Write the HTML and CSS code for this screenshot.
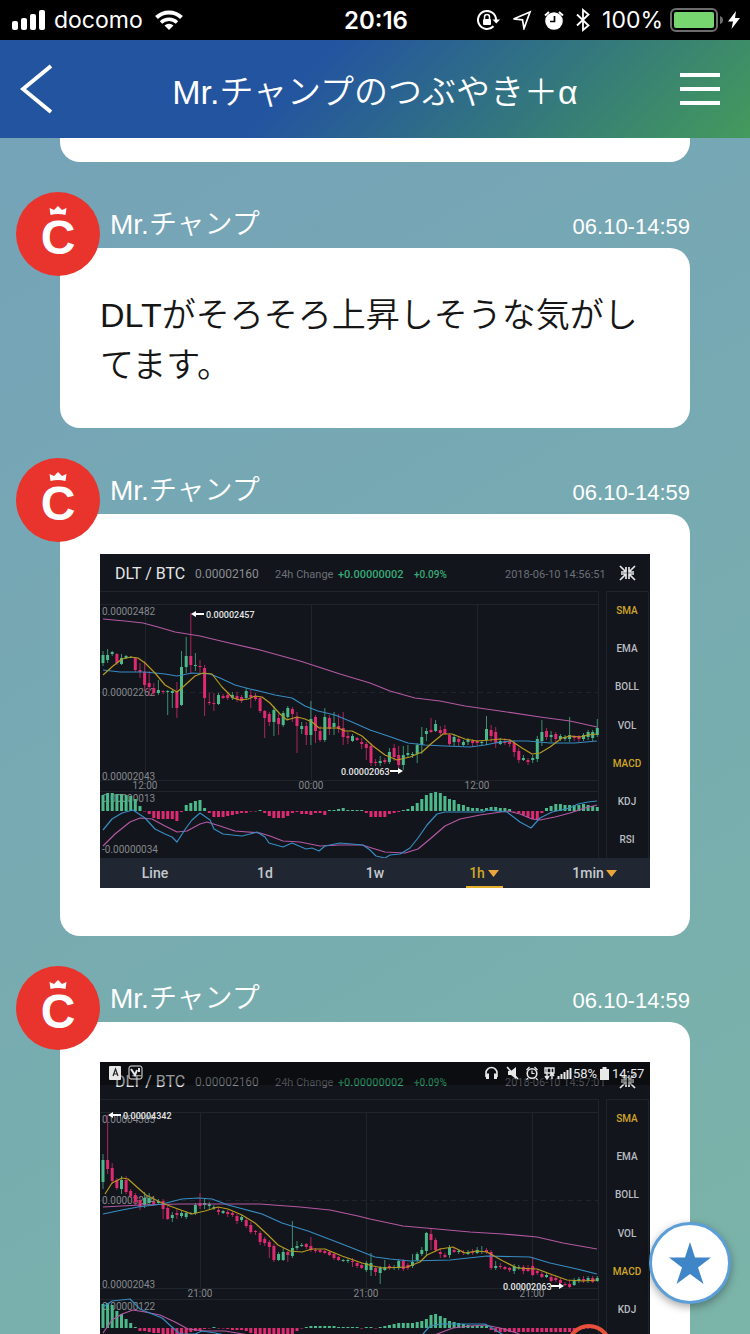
FILE: index.html
```html
<!DOCTYPE html>
<html lang="ja">
<head>
  <meta charset="UTF-8">
  <meta name="viewport" content="width=device-width, initial-scale=1.0">
  <title>Mr.チャンプのつぶやき＋α</title>
  <link rel="stylesheet" href="styles.css">
</head>
<body>
  <svg class="defs" aria-hidden="true">
    <symbol id="avatar" viewBox="0 0 84 84">
      <circle cx="42" cy="42" r="42" fill="#e9342d"/>
      <path d="M34.500 23l-1-7 4.500 2 4-4 4 4 4.500-2-1 7q-7.500-2-15 0z" fill="#fff"/>
      <text x="42" y="62" class="avatar-letter">C</text>
    </symbol>
  </svg>

  <div class="status-bar">
    <div class="status-left">
      <svg width="34" height="20" viewBox="0 0 34 20" fill="#fff">
        <rect x="0" y="11" width="6" height="9" rx="2"/>
        <rect x="9" y="8" width="6" height="12" rx="2"/>
        <rect x="18" y="4" width="6" height="16" rx="2"/>
        <rect x="27" y="0" width="6" height="20" rx="2"/>
      </svg>
      <span class="carrier">docomo</span>
      <svg class="wifi" width="28" height="20" viewBox="0 0 28 20" fill="none" stroke="#fff" stroke-width="4">
        <path d="M1.500 7.500a18 18 0 0 1 25 0"/>
        <path d="M6 12.500a11.500 11.500 0 0 1 16 0" stroke-width="3.500"/>
        <path d="M14 20l-4.500-4.500a6.500 6.500 0 0 1 9 0z" fill="#fff" stroke="none"/>
      </svg>
    </div>
    <time class="clock">20:16</time>
    <div class="status-right">
      <svg width="23" height="20" viewBox="0 0 23 20" fill="none" stroke="#fff" stroke-width="2">
        <path d="M16.500 16.200A9 9 0 1 1 19 10"/>
        <path d="M15.500 9.500h7.500l-3.700 4z" fill="#fff" stroke="none"/>
        <rect x="6" y="9" width="8" height="6" rx="1" fill="#fff" stroke="none"/>
        <path d="M7.500 9V7a2.500 2.500 0 0 1 5 0v2" stroke-width="1.500"/>
      </svg>
      <svg width="20" height="20" viewBox="0 0 20 20" fill="none" stroke="#fff" stroke-width="1.700">
        <path d="M18 2L1.500 9l9 .8 1.500 8.700z"/>
      </svg>
      <svg width="20" height="20" viewBox="0 0 20 20" fill="#fff">
        <circle cx="10" cy="11" r="8.800"/>
        <path d="M1 5.500L5 2M19 5.500L15 2" stroke="#fff" stroke-width="2"/>
        <path d="M10.500 6v5.500H6" fill="none" stroke="#000" stroke-width="1.700"/>
      </svg>
      <svg width="14" height="24" viewBox="0 0 14 24" fill="none" stroke="#fff" stroke-width="1.800">
        <path d="M1 6.500l11.500 11L7 22V2l5.500 4.500L1 17.500"/>
      </svg>
      <span class="percent">100%</span>
      <svg class="battery" width="54" height="24" viewBox="0 0 54 24">
        <rect x="1" y="1" width="46" height="22" rx="5" fill="none" stroke="#6d6d6d" stroke-width="2"/>
        <rect x="4" y="4" width="40" height="16" rx="2" fill="#78d671"/>
        <path d="M50 8q3 1 3 4t-3 4z" fill="#6d6d6d"/>
      </svg>
      <svg class="bolt" width="12" height="20" viewBox="0 0 12 20" fill="#fff">
        <path d="M8 1L0 11.500h5L3.500 19 12 8H7z"/>
      </svg>
    </div>
  </div>

  <header class="app-header">
    <button class="icon-btn" aria-label="戻る">
      <svg width="40" height="50" viewBox="0 0 40 50" fill="none" stroke="#fff" stroke-width="4">
        <path d="M31 2L3 25l28 23"/>
      </svg>
    </button>
    <h1 class="app-title">Mr.チャンプのつぶやき＋α</h1>
    <button class="icon-btn menu-btn" aria-label="メニュー">
      <svg width="40" height="32" viewBox="0 0 40 32" fill="#fff">
        <path d="M0 0h40v4H0zM0 14h40v4H0zM0 28h40v4H0z"/>
      </svg>
    </button>
  </header>

  <main class="feed">
    <div class="bubble-end"></div>

    <article class="post">
      <svg class="avatar" aria-hidden="true"><use href="#avatar"/></svg>
      <div class="post-head">
        <span class="post-name">Mr.チャンプ</span>
        <time class="post-time">06.10-14:59</time>
      </div>
      <div class="bubble">
        <p>DLTがそろそろ上昇しそうな気がしてます。</p>
      </div>
    </article>

    <article class="post">
      <svg class="avatar" aria-hidden="true"><use href="#avatar"/></svg>
      <div class="post-head">
        <span class="post-name">Mr.チャンプ</span>
        <time class="post-time">06.10-14:59</time>
      </div>
      <div class="bubble bubble-photo">
        <svg class="chart" id="chart-hour" viewBox="0 0 550 334" role="img" aria-label="DLT / BTC"></svg>
      </div>
    </article>

    <article class="post">
      <svg class="avatar" aria-hidden="true"><use href="#avatar"/></svg>
      <div class="post-head">
        <span class="post-name">Mr.チャンプ</span>
        <time class="post-time">06.10-14:59</time>
      </div>
      <div class="bubble bubble-photo">
        <svg class="chart" id="chart-day" viewBox="0 0 550 334" role="img" aria-label="DLT / BTC"></svg>
      </div>
    </article>
  </main>

  <button class="fab" aria-label="お気に入り">
    <svg width="42" height="42" viewBox="0 0 42 42" fill="#3f86c8">
      <path d="M21 0l5 15.500h16L29 25.500 34.500 42 21 32 7.500 42 13 25.500 0 15.500h16z"/>
    </svg>
  </button>

  <script src="chart.js"></script>
</body>
</html>
```
FILE: styles.css
```css
:root {
  --text: #161616;
  --radius: 20px;
  --font: "Liberation Sans", "Noto Sans CJK JP", sans-serif;
}

* {
  margin: 0;
  padding: 0;
  box-sizing: border-box;
}

body {
  font-family: var(--font);
  font-weight: 350;
  color: var(--text);
  height: 100vh;
  display: flex;
  flex-direction: column;
  overflow: hidden;
}

svg {
  display: block;
  flex: none;
}

button {
  border: none;
  background: none;
  cursor: pointer;
}

.defs {
  position: absolute;
  width: 0;
  height: 0;
}

/* status bar */
.status-bar {
  flex: none;
  height: 40px;
  padding: 0 10px 0 12px;
  display: grid;
  grid-template-columns: 1fr auto 1fr;
  align-items: center;
  background: #000;
  color: #fff;
  font-family: Inter, sans-serif;
  font-size: 24px;
  font-weight: 400;
}

.status-left,
.status-right {
  display: flex;
  align-items: center;
}

.carrier,
.percent {
  font-size: 23px;
}

.carrier {
  margin-left: 8px;
}

.wifi {
  margin-left: 12px;
}

.clock {
  font-weight: 600;
}

.status-right {
  justify-content: flex-end;
  gap: 12px;
}

.battery {
  margin-left: -5px;
}

.bolt {
  margin-left: -8px;
}

/* header */
.app-header {
  flex: none;
  height: 98px;
  padding: 0 20px;
  display: grid;
  grid-template-columns: 1fr auto 1fr;
  align-items: center;
  background: linear-gradient(135deg, #2354a0 40%, #449a5c);
  color: #fff;
}

.icon-btn {
  justify-self: start;
}

.menu-btn {
  justify-self: end;
  margin-right: 10px;
}

.app-title {
  font-size: 34px;
  font-weight: 350;
}

/* feed */
.feed {
  flex: 1;
  min-height: 0;
  padding: 0 60px;
  overflow-y: auto;
  scrollbar-width: none;
  background: linear-gradient(150deg, #75a3b8, #77abb1 50%, #7bb4a8);
}

.bubble-end {
  height: 24px;
  background: #fff;
  border-radius: 0 0 var(--radius) var(--radius);
}

.post {
  position: relative;
  margin-top: 30px;
}

.avatar {
  position: absolute;
  left: -44px;
  top: 0;
  width: 84px;
  height: 84px;
}

.avatar-letter {
  font-family: "Liberation Sans", sans-serif;
  font-size: 48px;
  font-weight: 700;
  text-anchor: middle;
  fill: #fff;
}

.post-head {
  height: 56px;
  padding: 13px 0 0 50px;
  display: flex;
  align-items: baseline;
  justify-content: space-between;
  color: #fff;
}

.post-name {
  font-size: 28px;
  line-height: 40px;
}

.post-time {
  font-size: 22px;
}

.bubble {
  padding: 42px 40px 38px;
  background: #fff;
  border-radius: var(--radius);
  font-size: 34px;
  line-height: 50px;
}

.bubble-photo {
  padding: 40px 40px 48px;
}

.fab {
  position: fixed;
  right: 19px;
  bottom: 30px;
  width: 82px;
  height: 82px;
  display: flex;
  align-items: center;
  justify-content: center;
  background: #fff;
  border: 3px solid #5c9fd8;
  border-radius: 50%;
  box-shadow: 0 3px 8px rgba(0, 0, 0, 0.35);
}

/* chart */
.chart {
  width: 100%;
  height: auto;
  font-family: Roboto, sans-serif;
  font-weight: 400;
}

.chart text {
  font-size: 10px;
  fill: #85888c;
}

.chart .pair {
  font-size: 16px;
  fill: #e4e6e8;
}

.chart .price {
  font-size: 12px;
  fill: #8b8e92;
}

.chart .small {
  font-size: 11px;
  fill: #6c7079;
}

.chart .gain {
  font-size: 11px;
  font-weight: 500;
  fill: #37ab76;
}

.chart .gain-rate {
  font-size: 10px;
  font-weight: 500;
  fill: #37ab76;
}

.chart .peak {
  font-size: 9px;
  font-weight: 500;
  fill: #e4e5e6;
}

.chart .side {
  font-weight: 500;
  text-anchor: middle;
  fill: #b9bcc1;
}

.chart .tab {
  font-size: 14px;
  font-weight: 500;
  text-anchor: middle;
  fill: #c5c9cf;
}

.chart .side.on,
.chart .tab.on {
  fill: #cfa628;
}

.chart .hour {
  text-anchor: middle;
}

.chart .phone {
  font-size: 13px;
  fill: #e8e8e8;
}
```
FILE: chart.js
```js
const UP = '#4bb98a';
const DOWN = '#df2a71';
const STEP = 4.62;

// g/r, high, body top, body bottom, low
const hourCandles = `g 97 101 109 112|g 95 101 106 109|g 97 98 100 102|r 99 100 109 111|g 100 104 110 111|g 101 102 104 105
g 102 103 104 104|r 103 104 116 118|r 109 116 118 124|r 107 118 131 137|r 117 129 133 142|r 129 134 139 142
g 126 136 139 141|r 136 137 138 140|g 136 137 138 161|g 136 137 139 154|r 128 137 154 164|g 97 113 151 152
g 83 102 113 119|r 59 102 111 120|g 99 111 112 117|r 106 112 113 120|r 111 114 144 162|r 139 148 149 151
r 139 149 150 157|g 139 141 150 151|r 140 142 144 145|r 138 141 144 146|g 138 141 144 146|r 138 142 145 148
r 141 143 147 149|g 134 137 144 146|r 136 141 143 154|r 139 142 145 147|r 142 144 157 159|r 156 157 164 184
r 158 160 168 172|g 152 156 168 182|r 160 164 170 181|g 157 159 171 173|g 152 154 163 166|r 153 155 160 168
r 158 163 172 199|g 168 172 175 180|r 168 172 181 191|g 147 165 181 191|r 161 163 177 189|r 172 177 186 188
g 154 163 186 188|r 161 164 175 181|g 158 169 173 181|r 160 172 175 179|r 158 174 183 191|r 178 182 184 190
g 180 182 187 188|r 183 184 186 187|r 184 188 190 195|r 188 190 194 206|r 189 192 209 212|r 205 208 209 212
g 202 207 209 212|r 204 206 208 210|g 194 198 208 210|r 190 194 203 207|r 192 201 211 214|g 192 201 211 216
g 191 199 201 204|g 198 200 201 204|g 189 191 200 209|g 173 183 191 200|g 174 177 180 187|r 164 176 178 179
g 166 170 177 178|r 172 176 179 181|r 171 175 180 181|r 179 181 190 192|g 180 183 188 192|r 183 185 188 192
g 186 188 191 193|g 184 186 188 191|r 185 187 189 193|r 186 187 189 191|g 186 188 189 192|g 162 175 186 191
r 171 176 182 188|r 173 178 189 194|g 184 187 190 191|r 184 187 189 191|r 185 187 190 193|r 186 189 198 203
r 194 197 206 209|g 201 204 206 207|r 204 206 208 211|g 201 204 206 209|g 182 185 205 208|g 166 178 187 192
r 174 177 183 186|g 177 181 183 188|r 178 180 185 188|g 180 182 185 187|g 181 183 185 187|g 163 181 185 188
r 181 182 184 187|r 181 182 185 188|g 179 181 185 187|g 176 178 183 186|g 176 178 184 187|g 165 174 181 183`;

const dayCandles = `g 92 98 120 127|r 53 98 107 112|r 101 106 119 122|r 116 118 126 128|g 114 118 127 132|r 114 118 130 132
r 127 129 134 136|r 131 133 140 143|r 135 138 145 148|g 130 136 143 146|g 131 136 141 143|r 138 140 142 144
g 137 139 141 143|r 137 139 147 157|r 144 146 157 158|g 150 153 156 160|r 147 151 153 157|g 149 151 154 156
g 149 151 155 157|g 150 151 152 153|g 141 143 151 153|r 131 141 144 147|g 136 141 143 147|g 140 142 144 147
g 143 145 146 148|r 145 148 150 153|g 148 149 151 152|r 148 150 152 155|r 149 151 153 155|r 152 154 159 162
g 153 155 158 160|r 156 158 164 166|r 160 163 170 172|r 168 169 170 173|r 169 171 180 183|r 175 177 181 184
r 178 180 185 196|r 182 184 198 200|g 190 192 198 199|g 186 190 198 199|r 189 190 193 200|g 159 186 194 196
g 179 184 186 188|g 181 183 184 185|r 181 182 185 187|r 175 184 188 190|r 186 188 189 191|r 187 188 190 191
r 188 189 191 192|r 189 190 193 194|r 191 192 196 198|r 194 195 198 199|g 197 198 199 200|g 196 198 199 201
r 196 199 200 205|r 199 201 204 206|r 201 203 206 207|g 199 201 208 210|g 191 201 208 214|r 205 206 210 214
g 204 206 211 222|g 198 205 208 209|r 202 204 206 208|g 203 205 206 208|g 197 199 206 208|r 197 199 207 209
r 201 203 206 208|g 192 200 204 206|g 190 192 198 200|g 185 188 192 194|g 170 171 189 193|r 167 172 178 188
r 176 178 188 190|r 186 190 192 196|r 191 193 195 196|g 183 186 193 196|r 186 188 190 191|g 187 189 190 192
r 188 190 191 193|g 188 190 192 193|r 187 190 191 193|g 185 188 191 192|g 184 189 190 192|r 186 188 190 192
r 188 190 206 208|g 199 204 206 208|r 201 204 205 207|r 204 205 207 208|r 205 206 208 210|g 202 204 209 212
g 203 205 206 208|r 203 205 209 212|r 203 206 209 210|r 195 204 213 214|r 207 209 211 213|r 210 212 215 216
g 211 213 215 216|r 213 215 219 220|r 214 216 218 220|r 216 218 221 223|r 220 222 223 224|r 218 222 225 226
g 216 219 223 224|g 215 217 219 221|r 214 217 219 221|g 214 216 219 221|r 214 216 220 221|g 214 216 219 220`;

const hourBars = [16,18,18,17,17,16,15,12,5,0,-3,-7,-8,-8,-8,-8,-10,-1,6,8,10,11,3,-2,-6,-6,-6,-5,-4,-3,-2,-2,0,0,1,-2,-5,-7,-7,-7,-5,-2,-1,-3,-3,-4,-2,-2,-4,1,1,2,3,1,1,1,1,-2,-6,-6,-6,-6,-3,-2,-1,1,2,5,8,12,16,18,19,18,15,12,11,7,6,4,3,3,2,3,4,4,3,3,2,0,-2,-4,-6,-8,-9,-2,3,5,7,7,6,6,6,6,7,6,5,4,4,4,4];
const dayBars = [24,25,23,17,14,9,5,1,-3,-3,-4,-5,-5,-6,-6,-6,-6,-6,-6,-4,-3,-2,-1,0,1,0,0,-1,-2,-2,-2,-3,-5,-6,-6,-6,-6,-6,-6,-6,-6,-6,-3,0,1,2,2,2,2,2,2,1,1,1,1,1,0,1,1,0,1,2,3,4,5,5,5,5,6,7,9,13,14,12,10,7,6,5,4,3,2,2,2,2,-2,-4,-4,-4,-4,-4,-4,-4,-4,-4,-4,-4,-4,-4,-4,-4,-4,-4,-3,-2,-1,0,0,0];

const hourLines = {
  '#b458a4': ['3,65 25,67 43,69 58,73 75,78 100,82 125,88 160,96 200,107 240,120 270,129 290,137 315,144 340,147 365,152 400,157 440,163 470,167 497,173',
    '3,292 15,280 30,268 40,264 52,265 65,272 77,278 87,277 100,270 107,268 120,272 135,277 160,279 170,282 183,287 200,288 220,292 240,291 262,291 275,295 285,298 305,299 318,295 330,285 345,272 360,265 380,261 408,257 420,260 432,265 440,266 455,263 470,259 485,254 497,251'],
  '#378cc3': ['3,116 20,118 45,118 65,120 77,122 92,119 110,120 120,124 135,131 150,135 163,138 175,141 192,144 205,152 218,157 235,161 252,168 270,176 288,182 308,189 325,191 345,192 370,193 385,191 395,189 410,187 428,187 450,189 475,189 497,187',
    '3,276 12,265 22,259 33,256 45,264 55,275 65,280 72,283 77,288 86,274 92,266 100,259 110,266 114,275 123,280 142,282 150,280 157,278 165,283 169,289 183,293 192,289 206,295 212,294 219,297 225,292 240,289 263,291 270,296 276,302 285,304 290,301 300,300 310,294 318,284 327,271 337,260 345,258 383,258 387,256 407,258 420,268 431,274 440,264 452,258 470,254 478,250 488,248 497,247'],
  '#b69a20': ['3,121 13,112 22,105 31,103 38,104 45,109 55,119 65,131 77,138 84,132 95,122 103,119 112,120 122,133 133,144 140,146 148,145 155,142 162,143 170,149 180,160 187,166 197,163 205,165 212,168 219,174 238,174 245,177 252,177 262,182 273,192 285,201 297,206 310,203 322,198 332,189 343,180 352,180 365,185 377,187 390,186 400,185 410,186 422,194 432,200 440,199 450,193 462,184 470,182 480,183 488,181 497,180']
};
const dayLines = {
  '#b458a4': ['3,145 40,143 80,142 160,142 200,145 230,148 258,154 270,157 303,164 337,167 370,170 403,172 437,175 463,181 497,187',
    '3,271 12,258 22,252 33,248 45,250 60,253 75,260 88,267 105,269 125,269 143,272 200,284 300,284 337,272 353,266 370,264 385,263 400,266 417,271 440,284'],
  '#378cc3': ['3,152 22,148 38,145 62,142 82,137 98,136 112,137 128,143 162,152 182,161 208,169 242,182 275,195 290,197 310,199 350,198 387,194 430,195 450,201 477,207 497,212',
    '3,245 12,239 30,237 40,247 62,256 72,265 80,272 95,272 102,269 115,271 135,275 200,290 300,290 323,272 330,264 340,262 385,262 392,266 402,272 430,290'],
  '#b69a20': ['5,132 12,121 22,116 28,117 38,126 46,133 62,141 78,147 92,152 105,149 118,145 128,147 142,153 155,161 168,173 178,183 190,189 202,190 212,187 225,187 242,194 262,201 273,204 283,206 307,205 320,200 327,193 340,187 353,185 365,191 377,189 387,190 403,199 417,206 437,207 453,213 467,218 483,219 497,218']
};

const rect = (x, y, w, h, fill) => `<rect x="${x}" y="${y}" width="${w}" height="${h}" fill="${fill}"/>`;
const text = (x, y, cls, str) => `<text x="${x}" y="${y}" class="${cls}">${str}</text>`;

function arrow(x, y, dir) {
  return `<path d="M${x} ${y}l${5 * dir} -3v2h${8 * dir}v2h${-8 * dir}v2z" fill="#fff"/>`;
}

function phoneBar() {
  return `<rect width="550" height="23" fill="#000" opacity=".35"/>
    <g fill="none" stroke="#e8e8e8" stroke-width="1.600">
      <rect x="9" y="4" width="12" height="14" rx="1" fill="#e8e8e8" stroke="none"/>
      <path d="M13 14l2.500-7 2.500 7M14 12h3.500" stroke="#222" stroke-width="1.200"/>
      <rect x="29" y="4" width="13" height="13" rx="2" stroke-width="1"/>
      <path d="M31 7l4 6 2-5M39 6v4" stroke-width="2"/>
      <path d="M386 15v-4a5.500 5.500 0 0 1 11 0v4"/>
      <path d="M387.500 11.500v5.500M395.500 11.500v5.500" stroke-width="3"/>
      <path d="M408 9h3l5-4v12l-5-4h-3z" fill="#e8e8e8" stroke="none"/>
      <path d="M407 5l11 12"/>
      <circle cx="432" cy="11.500" r="4.800"/>
      <path d="M432 8.500v3h2.500M426.500 8l3-3M437.500 8l-3-3M428 16l-1.500 2M436 16l1.500 2" stroke-width="1.200"/>
      <path d="M445 6h9v5h-9zM447 6v5M451 6v5M447 11v5m-2-2l2 3 2-3M452 17v-5m-2 2l2-3 2 3" stroke-width="1.400"/>
      <path d="M458.500 17v-3M461.500 17v-5M464.500 17v-7M467.500 17V8M470.500 17V6" stroke-width="2"/>
      <path d="M500 7h2.500V5h4v2h2.500v11h-9z" fill="#e8e8e8" stroke="none"/>
    </g>` + text(473, 16, 'phone', '58%') + text(512, 16, 'phone', '14:57');
}

function drawChart(id, c) {
  let s = rect(0, 0, 550, 334, '#12151b');

  // grid
  s += `<g fill="none" stroke="#20252b"><path d="M0 37.500H498.500V304M0 50.500H498M0 226.500H498M0 237.500H498M506.500 304V37.500H548.500V304"/>
    <path d="M0 138.500H498" stroke-dasharray="5 4"/>
    <path d="${c.hours.map(h => `M${h[0] + 0.5} 50V226`).join('')}"/></g>`;

  s += text(15, 25, 'pair', 'DLT / BTC');
  s += text(95, 24, 'price', '0.00002160');
  s += text(175, 24, 'small', '24h Change');
  s += text(238, 24, 'gain', '+0.00000002');
  s += text(314, 24, 'gain-rate', '+0.09%');
  s += text(405, 24, 'small', c.date);
  s += `<path d="M520 12l6 6M535 12l-6 6M520 26l6-6M535 26l-6-6M526 13v5h-5M529 13v5h5M526 25v-5h-5M529 25v-5h5" fill="none" stroke="#e6e6e6" stroke-width="1.700"/>`;

  c.axis.forEach(a => { s += text(2, a[0], 'axis', a[1]); });
  c.hours.forEach(h => { s += text(h[0], 235, 'hour', h[1]); });

  c.candles.split(/[|\n]/).forEach((row, i) => {
    const [dir, high, top, bottom, low] = row.split(' ');
    const x = 3 + i * STEP;
    const color = dir === 'g' ? UP : DOWN;
    s += `<g transform="translate(${x.toFixed(1)} 0)">` +
      `<path d="M0 ${high}V${low}" stroke="${color}" opacity=".75"/>` +
      rect(-1.5, top, 3, Math.max(bottom - top, 1), color) + '</g>';
  });

  c.bars.slice(0, 108).forEach((h, i) => {
    const size = Math.max(Math.abs(h), 0.5);
    s += rect((1.5 + i * STEP).toFixed(1), h > 0 ? c.base - size : c.base, 3, size, h > 0 ? UP : DOWN);
  });

  for (const color in c.lines) {
    c.lines[color].forEach(points => {
      s += `<polyline points="${points}" fill="none" stroke="${color}" stroke-width="1.200" stroke-linejoin="round"/>`;
    });
  }

  c.peaks.forEach(p => {
    s += arrow(p.ax, p.ay, p.dir) + text(p.x, p.ay + 4, 'peak', p.label);
  });

  ['SMA', 'EMA', 'BOLL', 'VOL', 'MACD', 'KDJ', 'RSI'].forEach((name, i) => {
    const on = name === 'SMA' || name === 'MACD' ? ' on' : '';
    s += text(527, 60 + Math.round(i * 38.2), 'side' + on, name);
  });

  // bottom tabs
  s += rect(0, 304, 550, 30, '#202732');
  s += text(55, 324, 'tab', 'Line') + text(165, 324, 'tab', '1d') + text(275, 324, 'tab', '1w');
  s += text(377, 324, 'tab on', '1h') + text(488, 324, 'tab', '1min');
  s += '<path d="M388 316h11l-5.500 7zM506 316h11l-5.500 7z" fill="#eaa63c"/>';
  s += rect(366, 332, 37, 2, '#e5b02c');

  if (c.phone) {
    s += phoneBar();
    s += '<circle cx="489" cy="285" r="21" fill="none" stroke="#e8503a" stroke-width="4"/>';
  }

  document.getElementById(id).innerHTML = s;
}

drawChart('chart-hour', {
  date: '2018-06-10 14:56:51',
  axis: [[61, '0.00002482'], [142, '0.00002262'], [226, '0.00002043'], [248, '0.00000013'], [299, '-0.00000034']],
  hours: [[45, '12:00'], [211, '00:00'], [377, '12:00']],
  candles: hourCandles,
  bars: hourBars,
  base: 257,
  lines: hourLines,
  peaks: [
    { ax: 91, ay: 60, dir: 1, x: 106, label: '0.00002457' },
    { ax: 303, ay: 217, dir: -1, x: 241, label: '0.00002063' }
  ]
});

drawChart('chart-day', {
  date: '2018-06-10 14:57:01',
  axis: [[61, '0.00004385'], [142, '0.00003214'], [226, '0.00002043'], [248, '0.00000122']],
  hours: [[100, '21:00'], [266, '21:00'], [432, '21:00']],
  candles: dayCandles,
  bars: dayBars,
  base: 266,
  lines: dayLines,
  peaks: [
    { ax: 8, ay: 53, dir: 1, x: 23, label: '0.00004342' },
    { ax: 464, ay: 224, dir: -1, x: 403, label: '0.00002063' }
  ],
  phone: true
});
```
